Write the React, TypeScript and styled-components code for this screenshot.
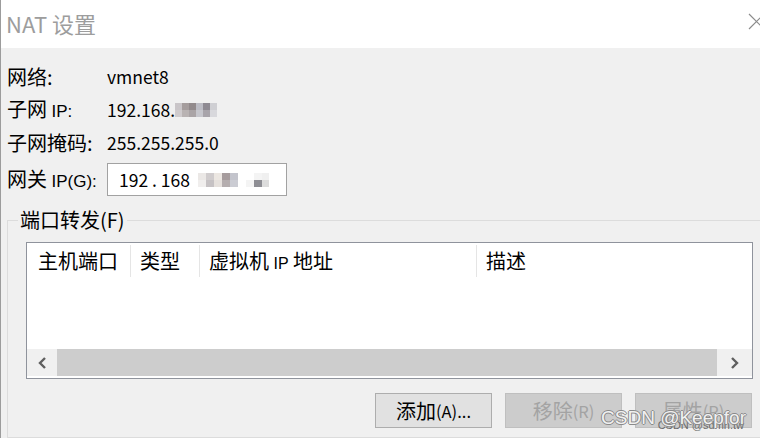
import React from "react";
import styled, { createGlobalStyle } from "styled-components";

const GlobalStyle = createGlobalStyle`
  html, body { margin: 0; padding: 0; }
  body {
    width: 760px;
    height: 438px;
    overflow: hidden;
    background: #f0f0f0;
    font-family: "Noto Sans CJK SC", "Noto Sans", sans-serif;
    color: #000;
  }
  #root { width: 760px; height: 438px; }
`;

const Window = styled.div`
  position: relative;
  width: 760px;
  height: 438px;
  box-sizing: border-box;
  border-left: 1px solid #9c9c9c;
  display: flex;
  flex-direction: column;
  overflow: hidden;
  background: #f0f0f0;
`;

const TitleBar = styled.div`
  height: 48px;
  flex: none;
  background: #fff;
  display: flex;
  align-items: center;
  justify-content: space-between;
  padding-left: 5px;
`;

const Title = styled.div`
  font-size: 22px;
  line-height: 1;
  color: #9d9d9d;
  margin-top: -2px;
`;

const CloseIcon = styled.svg`
  width: 17px;
  height: 17px;
  margin-right: -5px;
  margin-top: -5px;
  flex: none;
`;

const Body = styled.div`
  flex: 1;
  padding: 12px 0 0 6px;
  display: flex;
  flex-direction: column;
  min-height: 0;
`;

const InfoGrid = styled.div`
  display: grid;
  grid-template-columns: 100px auto;
  grid-auto-rows: 33px;
  align-items: center;
`;

const Label = styled.div`
  font-size: 20px;
  line-height: 33px;
  white-space: nowrap;
`;

const Value = styled.div`
  font-size: 17.5px;
  line-height: 33px;
  white-space: nowrap;
  display: flex;
  align-items: center;
`;

const Latin = styled.span<{ $size?: number }>`
  font-family: "Liberation Sans", "Noto Sans", sans-serif;
  font-size: ${(p) => p.$size ?? 17}px;
`;

const Num = styled.span<{ $size?: number }>`
  font-size: ${(p) => p.$size ?? 17.5}px;
`;

const GatewayRow = styled.div`
  display: flex;
  align-items: center;
  height: 33px;
  margin-top: 4px;
`;

const GatewayLabel = styled(Label)`
  width: 100px;
`;

const InputBox = styled.div`
  width: 180px;
  height: 33px;
  box-sizing: border-box;
  border: 1px solid #a2a2a2;
  background: #fff;
  padding-left: 11px;
  display: flex;
  align-items: center;
  font-size: 17.5px;
  white-space: nowrap;
`;

const Mosaic = styled.span<{ $gap?: number }>`
  display: inline-grid;
  grid-auto-flow: column;
  grid-template-rows: 7px 7px;
  margin-left: ${(p) => p.$gap ?? 0}px;
`;

const Tile = styled.span<{ $c: string; $w: number }>`
  display: block;
  width: ${(p) => p.$w}px;
  height: 7px;
  background: ${(p) => p.$c};
`;

const GroupBox = styled.fieldset`
  margin: 12px -40px 0 0;
  padding: 0;
  border: 1px solid #dcdcdc;
  flex: 1;
  min-width: 0;
`;

const Legend = styled.legend`
  margin-left: 10px;
  padding: 0 2px;
  font-size: 20px;
  line-height: 24px;
`;

const ListView = styled.div`
  width: 727px;
  height: 137px;
  box-sizing: border-box;
  margin: 10px 0 0 18px;
  border: 1px solid #8f939c;
  background: #fff;
  display: flex;
  flex-direction: column;
`;

const Header = styled.div`
  height: 34px;
  display: flex;
  flex: none;
`;

const HeaderCell = styled.div<{ $w?: number; $pad?: number }>`
  ${(p) => (p.$w ? `width: ${p.$w}px; flex: none;` : "flex: 1;")}
  box-sizing: border-box;
  padding-left: ${(p) => p.$pad ?? 9}px;
  border-right: ${(p) => (p.$w ? "1px solid #e5e5e5" : "none")};
  margin: 2px 0 0;
  font-size: 20px;
  line-height: 32px;
  white-space: nowrap;
`;

const ListSpace = styled.div`
  flex: 1;
`;

const HScroll = styled.div`
  height: 27px;
  margin-bottom: 2px;
  display: flex;
  background: #f0f0f0;
  flex: none;
`;

const ScrollButton = styled.div<{ $w: number }>`
  width: ${(p) => p.$w}px;
  flex: none;
  display: flex;
  align-items: center;
  justify-content: center;
`;

const Thumb = styled.div`
  flex: 1;
  background: #cdcdcd;
`;

const ButtonRow = styled.div`
  width: 727px;
  margin: 14px 0 0 18px;
  display: flex;
  justify-content: flex-end;
  gap: 13px;
  padding-right: 1px;
  box-sizing: border-box;
`;

const Button = styled.div<{ $disabled?: boolean }>`
  width: 117px;
  height: 35px;
  box-sizing: border-box;
  border: 1px solid ${(p) => (p.$disabled ? "#bfbfbf" : "#adadad")};
  background: ${(p) => (p.$disabled ? "#cccccc" : "#e1e1e1")};
  color: ${(p) => (p.$disabled ? "#a3a3a3" : "#000")};
  display: flex;
  align-items: center;
  justify-content: center;
  font-size: 20px;
  white-space: nowrap;
`;

const Watermark = styled.div`
  position: absolute;
  right: 14px;
  bottom: 9px;
  font-family: "Liberation Sans", Arial, sans-serif;
  font-size: 19px;
  color: rgba(255, 255, 255, 0.9);
  text-shadow: 1px 0 0 #8a8a8a, -1px 0 0 #8a8a8a, 0 1px 0 #8a8a8a, 0 -1px 0 #8a8a8a;
  white-space: nowrap;
  pointer-events: none;
`;

const SubMark = styled.div`
  position: absolute;
  right: 16px;
  bottom: 7px;
  font-family: "Liberation Sans", Arial, sans-serif;
  font-size: 11px;
  color: #6a6a6a;
  white-space: nowrap;
  pointer-events: none;
`;

const Chevron = ({ dir }: { dir: "left" | "right" }) => (
  <svg width="11" height="12" viewBox="0 0 11 12">
    <polyline
      points={dir === "left" ? "8,1 3,6 8,11" : "3,1 8,6 3,11"}
      fill="none"
      stroke="#5f5f5f"
      strokeWidth="2.4"
    />
  </svg>
);

type Cell = [string, string, number];

const subnetTiles: Cell[] = [
  ["#c9c5c8", "#cfcbcd", 7],
  ["#a59d9d", "#b9b3b3", 7],
  ["#928a8c", "#aaa4a6", 7],
  ["#bcbcc4", "#c6c6cc", 7],
  ["#8e8a92", "#a8a4aa", 7],
  ["#cfcfd3", "#d8d8dc", 7],
];

const gatewayTiles: Cell[] = [
  ["#ebe8e6", "#f0eeed", 8],
  ["#d0cccd", "#c6c2c4", 8],
  ["#ece7e2", "#e6e1dd", 8],
  ["#a69c9d", "#b5aeaf", 8],
  ["#c3c4cc", "#cbccd3", 8],
  ["#ffffff", "#ffffff", 8],
  ["#ffffff", "#f4f4f4", 8],
  ["#f4f4f4", "#8e8e94", 8],
  ["#f0f0f0", "#dcdcdc", 7],
];

const Pixelated = ({ cells, gap }: { cells: Cell[]; gap?: number }) => (
  <Mosaic $gap={gap}>
    {cells.map(([top, bottom, w], i) => (
      <React.Fragment key={i}>
        <Tile $c={top} $w={w} />
        <Tile $c={bottom} $w={w} />
      </React.Fragment>
    ))}
  </Mosaic>
);

export default function App() {
  return (
    <>
      <GlobalStyle />
      <Window>
        <TitleBar>
          <Title>NAT 设置</Title>
          <CloseIcon viewBox="0 0 17 17">
            <path d="M1 1 L16 16 M16 1 L1 16" stroke="#8c8c8c" strokeWidth="1.2" fill="none" />
          </CloseIcon>
        </TitleBar>
        <Body>
          <InfoGrid>
            <Label>网络:</Label>
            <Value>vmnet8</Value>
            <Label>
              子网 <Latin>IP:</Latin>
            </Label>
            <Value>
              192.168.
              <Pixelated cells={subnetTiles} />
            </Value>
            <Label>子网掩码:</Label>
            <Value>255.255.255.0</Value>
          </InfoGrid>
          <GatewayRow>
            <GatewayLabel>
              网关 <Latin>IP(G):</Latin>
            </GatewayLabel>
            <InputBox>
              192 . 168
              <Pixelated cells={gatewayTiles} gap={8} />
            </InputBox>
          </GatewayRow>
          <GroupBox>
            <Legend>端口转发(F)</Legend>
            <ListView>
              <Header>
                <HeaderCell $w={104} $pad={11}>主机端口</HeaderCell>
                <HeaderCell $w={69}>类型</HeaderCell>
                <HeaderCell $w={277}>
                  虚拟机 <Latin $size={16}>IP</Latin> 地址
                </HeaderCell>
                <HeaderCell>描述</HeaderCell>
              </Header>
              <ListSpace />
              <HScroll>
                <ScrollButton $w={30}>
                  <Chevron dir="left" />
                </ScrollButton>
                <Thumb />
                <ScrollButton $w={35}>
                  <Chevron dir="right" />
                </ScrollButton>
              </HScroll>
            </ListView>
            <ButtonRow>
              <Button>
                添加<Num $size={16.5}>(A)...</Num>
              </Button>
              <Button $disabled>
                移除<Num $size={16.5}>(R)</Num>
              </Button>
              <Button $disabled>
                属性<Num $size={16.5}>(P)</Num>
              </Button>
            </ButtonRow>
          </GroupBox>
        </Body>
        <SubMark>CSDN @sdmn.tw</SubMark>
        <Watermark>CSDN @Keepfor</Watermark>
      </Window>
    </>
  );
}
